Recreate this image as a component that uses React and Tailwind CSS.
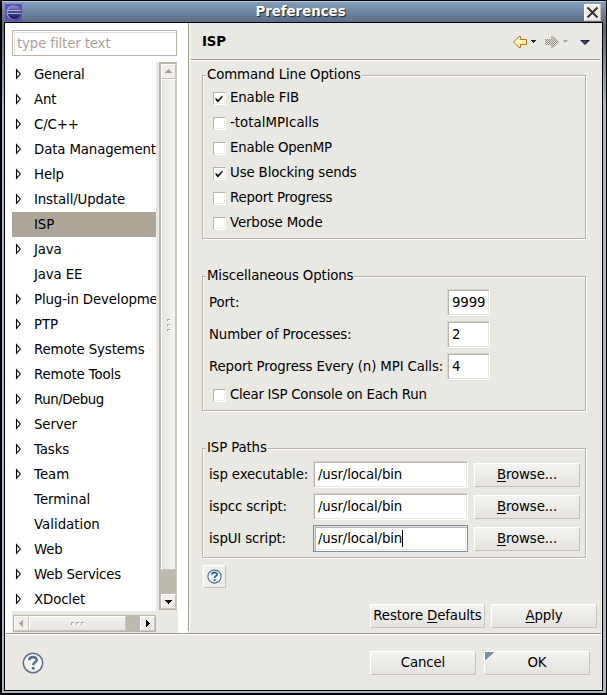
import React from 'react';

const TREE = [
  ['General', true, 'tracking-[-0.3px]'], ['Ant', true, 'tracking-[-0.2px]'], ['C/C++', true], ['Data Management', true], ['Help', true],
  ['Install/Update', true], ['ISP', false], ['Java', true], ['Java EE', false],
  ['Plug-in Development', true], ['PTP', true], ['Remote Systems', true], ['Remote Tools', true],
  ['Run/Debug', true, 'tracking-[-0.45px]'], ['Server', true], ['Tasks', true], ['Team', true, 'tracking-normal'], ['Terminal', false, 'tracking-normal'],
  ['Validation', false, 'tracking-normal'], ['Web', true], ['Web Services', true, 'tracking-[-0.22px]'], ['XDoclet', true],
];

function Group({ title, className, children }) {
  return (
    <div className={`ml-[12px] w-[384px] border border-[#bab5aa] shadow-[1px_1px_0_#fff,inset_1px_1px_0_#fff] ${className}`}>
      <div className="-mt-[9px] ml-[3px] h-[16px] w-fit bg-[#e9e8e3] pl-px pr-px leading-[16px]">{title}</div>
      {children}
    </div>
  );
}

function Check({ label, checked, className = '' }) {
  return (
    <div className="flex h-[25px] items-center pl-[10px]">
      <div className="mt-[2px] h-[13px] w-[13px] border border-r-white border-b-white border-[#bab5aa] bg-white shadow-[inset_-1px_-1px_0_#efeeea]">
        {checked && (
          <svg width="11" height="11" viewBox="0 0 11 11" className="block">
            <path d="M1.5 4.5L4 6.7L8.5 2.2V4.2L4.2 9.2H3.5L1.5 6.8Z" fill="#111" />
          </svg>
        )}
      </div>
      <span className={`ml-[4px] ${className}`}>{label}</span>
    </div>
  );
}

function Field({ value, className, focused }) {
  return (
    <div
      className={`flex h-[27px] items-center border bg-white pl-[4px] ${
        focused
          ? 'border-[#7590ae] shadow-[inset_1px_1px_0_#e2dfd8,inset_2px_2px_0_#bab5aa,inset_-1px_-1px_0_#fff,inset_-2px_-2px_0_#e9e8e3]'
          : 'border-[#d8d5cd] border-r-white border-b-white shadow-[inset_1px_1px_0_#bab5aa,inset_-1px_-1px_0_#e9e8e3]'
      } ${className}`}
    >
      {value}
      {focused && <span className="h-[17px] w-px bg-black" />}
    </div>
  );
}

function Button({ children, className = 'w-[106px]' }) {
  return (
    <div className={`flex h-[24px] shrink-0 items-center justify-center border border-white border-r-[#c9c4bb] border-b-[#c9c4bb] bg-linear-to-b from-[#f3f3f1] to-[#e5e3de] ${className}`}>
      {children}
    </div>
  );
}

function ScrollButton({ d, dim }) {
  return (
    <div className="h-[15px] w-[15px] shrink-0 border border-white border-r-[#c9c4bb] border-b-[#c9c4bb] bg-[#efeeeb]">
      <svg width="13" height="13" viewBox="0 0 13 13" className="block" shapeRendering="crispEdges">
        <path d={d} fill={dim ? '#aaa59a' : '#000'} />
      </svg>
    </div>
  );
}

function Tree() {
  return (
    <div className="h-[549px] w-[144px] overflow-hidden bg-white">
      {TREE.map(([name, expandable, tracking]) => (
        <div key={name} className={`flex h-[25px] items-center whitespace-nowrap ${name === 'ISP' ? 'bg-[#ada598]' : ''}`}>
          <div className="w-[22px] shrink-0">
            {expandable && (
              <svg width="10" height="12" viewBox="0 0 10 12" className="ml-[3px] -mt-px block">
                <path d="M1.5 1.7V10.3L5.3 6Z" fill="#fff" stroke="#000" strokeWidth="1.1" />
              </svg>
            )}
          </div>
          <span className={tracking}>{name}</span>
        </div>
      ))}
    </div>
  );
}

function Sidebar() {
  return (
    <div className="h-[610px] w-[183px] bg-white pl-[7px] pt-[7px]">
      <div className="flex h-[26px] w-[165px] items-center border border-[#bab5aa] pt-px pl-[4px] text-[#aaa297] shadow-[inset_1px_1px_0_#fff,inset_2px_2px_0_#e2dfd8]">
        type filter text
      </div>
      <div className="mt-[6px] flex h-[549px]">
        <Tree />
        <div className="h-full w-[21px] bg-[#e9e8e3] pl-[3px]">
          <div className="flex h-[548px] w-[18px] flex-col border border-r-[#d0ccc3] border-[#bab5aa] bg-[#bfbab0] pt-px pl-px">
            <ScrollButton dim d="M3 8H10V7H9V6H8V5H7V4H6V5H5V6H4V7H3Z" />
            <div className="flex h-[491px] w-[15px] flex-col items-center justify-center gap-[3px] border border-white border-r-[#c9c4bb] border-b-[#c9c4bb] bg-linear-to-r from-[#e6e5e1] to-[#f3f3f1]">
              {[0, 1, 2].map((i) => (
                <span key={i} className="h-[2px] w-[3px] border-t border-l border-[#aaa59a] bg-white" />
              ))}
            </div>
            <div className="h-[24px]" />
            <ScrollButton d="M3 5H10V6H9V7H8V8H7V9H6V8H5V7H4V6H3Z" />
          </div>
        </div>
      </div>
      <div className="h-[22px] w-[166px] bg-[#e9e8e3] pt-[4px]">
        <div className="ml-px flex h-[17px] w-[143px] border border-[#bab5aa] bg-[#bfbab0]">
          <ScrollButton dim d="M8 3V10H7V9H6V8H5V7H4V6H5V5H6V4H7V3Z" />
          <div className="flex h-[15px] w-[97px] items-center justify-center gap-[2px] border border-white border-r-[#c9c4bb] border-b-[#c9c4bb] bg-linear-to-b from-[#f3f3f1] to-[#e6e5e1]">
            {[0, 1, 2].map((i) => (
              <span key={i} className="h-[3px] w-[3px] border-t border-l border-[#aaa59a] bg-white" />
            ))}
          </div>
          <div className="w-[14px]" />
          <ScrollButton d="M5 3V10H6V9H7V8H8V7H9V6H8V5H7V4H6V3Z" />
        </div>
      </div>
    </div>
  );
}

function Toolbar() {
  return (
    <svg width="80" height="16" viewBox="0 0 80 16" className="mt-[2px] mr-[10px] shrink-0">
      <defs>
        <linearGradient id="gold" x2="0" y2="1">
          <stop offset="0" stopColor="#fffef0" />
          <stop offset="1" stopColor="#ffe58a" />
        </linearGradient>
        <pattern id="dither" width="2" height="2" patternUnits="userSpaceOnUse">
          <rect width="1" height="1" fill="#8e8577" />
          <rect x="1" y="1" width="1" height="1" fill="#8e8577" />
        </pattern>
      </defs>
      <path d="M1.5 8L7 2.5H8.5V5.5H14.5V10.5H8.5V13.5H7Z" fill="url(#gold)" stroke="#b87514" strokeLinejoin="round" />
      <path d="M19 6H24V7H23V8H22V9H21V8H20V7H19Z" fill="#222" />
      <path d="M46.5 8L41 2.5H39.5V5.5H33.5V10.5H39.5V13.5H41Z" fill="url(#dither)" stroke="#9a8e7c" strokeDasharray="1 1" />
      <path d="M53 8.5L54.5 9.5L57 7" stroke="#fff" fill="none" />
      <path d="M51 6H56L53.5 9Z" fill="#aaa59a" />
      <path d="M68 6H78L73 11Z" fill="#111" />
      <path d="M69 6.5H76L72.5 10Z" fill="#45438e" />
    </svg>
  );
}

function HelpIcon({ size, color }) {
  return (
    <svg width={size} height={size} viewBox="0 0 22 22">
      <circle cx="11" cy="11" r="9.7" fill="#f4f4f4" stroke={color} strokeWidth="1.5" />
      <path d="M7.2 8.3C7.4 4 15 4.2 14.7 8.2C14.5 10.4 11.2 10.4 11.2 13.3" fill="none" stroke={color} strokeWidth="2.6" />
      <rect x="9.8" y="15" width="2.8" height="2.6" fill={color} />
    </svg>
  );
}

function Page() {
  return (
    <div className="h-[610px] w-[412px] bg-[#e9e8e3]">
      <div className="flex h-[36px] items-center justify-between pl-[12px]">
        <span className="pt-px font-bold">ISP</span>
        <Toolbar />
      </div>
      <div className="ml-px h-[2px] w-[409px] border-t border-[#9b978b] bg-white" />
      <Group title="Command Line Options" className="mt-[14px] h-[164px]">
        <div className="pt-[2px]">
          <Check label="Enable FIB" checked />
          <Check label="-totalMPIcalls" className="tracking-[0.03px]" />
          <Check label="Enable OpenMP" className="tracking-[-0.22px]" />
          <Check label="Use Blocking sends" checked />
          <Check label="Report Progress" className="tracking-[-0.2px]" />
          <Check label="Verbose Mode" />
        </div>
      </Group>
      <Group title="Miscellaneous Options" className="mt-[37px] h-[135px]">
        <div className="flex flex-col gap-[5px] pt-[5px] pl-[6px]">
          {[['Port:', '9999'], ['Number of Processes:', '2'], ['Report Progress Every (n) MPI Calls:', '4']].map(([l, v]) => (
            <div key={l} className="flex items-center">
              <span className="w-[238px] whitespace-nowrap">{l}</span>
              <Field value={v} className="w-[43px]" />
            </div>
          ))}
        </div>
        <div className="mt-[2px]"><Check label="Clear ISP Console on Each Run" className="tracking-[-0.25px]" /></div>
      </Group>
      <Group title="ISP Paths" className="mt-[37px] h-[110px]">
        <div className="flex flex-col gap-[5px] pt-[5px] pl-[6px]">
          {['isp executable:', 'ispcc script:', 'ispUI script:'].map((l, i) => (
            <div key={l} className="flex items-center">
              <span className="w-[104px] whitespace-nowrap">{l}</span>
              <Field value="/usr/local/bin" className="w-[155px]" focused={i === 2} />
              <Button className="mt-px ml-[6px] w-[106px]"><span><u className="underline-offset-2">B</u>rowse...</span></Button>
            </div>
          ))}
        </div>
      </Group>
      <div className="mt-[7px] ml-[13px] flex h-[23px] w-[23px] items-center justify-center border border-white border-r-[#c9c4bb] border-b-[#c9c4bb] bg-[#efeeeb]">
        <HelpIcon size={15} color="#2f6496" />
      </div>
      <div className="mt-[16px] flex gap-[6px] pl-[180px]">
        <Button className="w-[115px]"><span>Restore <u className="underline-offset-2">D</u>efaults</span></Button>
        <Button><span><u className="underline-offset-2">A</u>pply</span></Button>
      </div>
    </div>
  );
}

function EclipseIcon() {
  return (
    <svg width="17" height="17" viewBox="0 0 17 17">
      <defs>
        <linearGradient id="orb" x2="0" y2="1">
          <stop offset="0" stopColor="#8f8fc0" />
          <stop offset=".45" stopColor="#4a4a8c" />
          <stop offset="1" stopColor="#16164c" />
        </linearGradient>
      </defs>
      <rect width="17" height="17" fill="#5a4fbd" />
      <circle cx="8.5" cy="8.5" r="7" fill="#b9a9dc" />
      <circle cx="9.3" cy="8.5" r="6.8" fill="url(#orb)" />
      <path d="M3 6.5H15.5M2.5 9.5H16" stroke="#a6a9dc" />
    </svg>
  );
}

export default function App() {
  return (
    <div className="h-[695px] w-[607px] overflow-hidden bg-black pt-px pl-[2px] text-[13.33px] leading-[16px] tracking-[-0.13px] text-black [font-family:'DejaVu_Sans',sans-serif]">
      <div className="h-[692px] w-[604px] bg-linear-to-b from-[#7c98b8] from-[0%] via-[#566b82] via-[4%] to-[#a9b7ca] to-[15%]">
        <div className="flex h-[21px] w-[604px] items-center border-t border-[#b3c5da] bg-linear-to-b from-[#829dbc] to-[#5a6e85] pl-[3px]">
          <EclipseIcon />
          <div className="flex-1 pr-[5px] text-center font-bold tracking-normal text-white [text-shadow:1px_1px_1px_#222]">Preferences</div>
          <div className="mr-[5px] flex h-[17px] w-[17px] items-center justify-center border border-white border-r-[#c9c4bb] border-b-[#c9c4bb] bg-[#eeedea]">
            <svg width="13" height="13" viewBox="0 0 13 13"><path d="M1.5 1.5L11.5 11.5M11.5 1.5L1.5 11.5" stroke="#333" strokeWidth="2" /></svg>
          </div>
        </div>
        <div className="ml-[2px] w-[599px] border border-black bg-[#e9e8e3]">
          <div className="flex h-[610px]">
            <Sidebar />
            <div className="h-[608px] w-[2px] shrink-0 border-l border-[#9b978b] bg-white" />
            <Page />
          </div>
          <div className="ml-px h-[2px] w-[595px] border-t border-[#9b978b] bg-white" />
          <div className="flex h-[55px] items-center">
            <div className="ml-[17px]"><HelpIcon size={22} color="#5c6f8f" /></div>
            <div className="mt-px ml-[326px] flex gap-[8px]">
              <Button>Cancel</Button>
              <Button className="relative w-[106px]">
                <svg width="10" height="10" viewBox="0 0 10 10" className="absolute top-0 left-0">
                  <path d="M0 0H10L0 9Z" fill="#7590ae" /><path d="M0 .5H10" stroke="#8d8d86" /><path d="M10 0L0 9.5" stroke="#fff" />
                </svg>
                OK
              </Button>
            </div>
          </div>
        </div>
      </div>
    </div>
  );
}
